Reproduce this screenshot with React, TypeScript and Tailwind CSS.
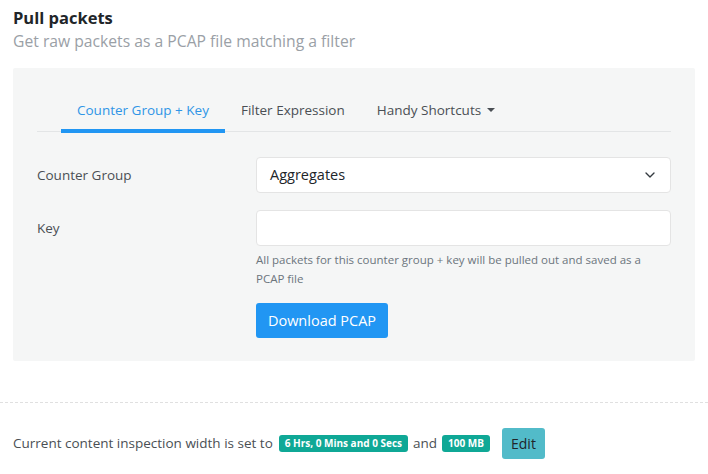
import { ChevronDown } from 'lucide-react';

export default function App() {
  return (
    <div className="w-[708px] h-[474px] bg-white text-[#212529] overflow-hidden" style={{ fontFamily: '"Open Sans", Lato, sans-serif' }}>
      {/* Header */}
      <div className="px-[13px] pt-[6px]">
        <h2 className="text-[16.5px] font-bold leading-[24px] text-[#212529]">Pull packets</h2>
        <p className="text-[15.7px] leading-[22px] text-[#9aa0a6]">Get raw packets as a PCAP file matching a filter</p>
      </div>

      {/* Panel */}
      <div className="mx-[13px] mt-[16px] w-[682px] h-[293px] bg-[#f5f6f6] rounded-[2px] px-[24px] pt-[28px]">
        <div className="flex border-b border-[#e3e5e6] h-[36px] items-stretch">
          <div className="ml-[24px] px-[16px] text-[13.5px] text-[#2f95e6] border-b-[4px] border-[#2196f3] mb-[-2px] pt-[4px]">Counter Group + Key</div>
          <div className="px-[16px] text-[13.5px] text-[#4a4f54] pt-[4px]">Filter Expression</div>
          <div className="px-[16px] text-[13.5px] text-[#4a4f54] pt-[4px] flex items-start gap-[6px]">
            Handy Shortcuts
            <span className="mt-[8px] w-0 h-0 border-l-[4px] border-r-[4px] border-t-[4px] border-l-transparent border-r-transparent border-t-[#4a4f54]" />
          </div>
        </div>

        <div className="mt-[25px] flex items-center">
          <div className="w-[219px] text-[13.5px] text-[#4a4f54]">Counter Group</div>
          <div className="flex-1 h-[36px] bg-white border border-[#e4e4e4] rounded-[4px] flex items-center justify-between pl-[13px] pr-[12px]">
            <span className="text-[14.5px] text-[#212529]">Aggregates</span>
            <ChevronDown size={16} strokeWidth={2} className="text-[#343a40]" />
          </div>
        </div>

        <div className="mt-[17px] flex items-start">
          <div className="w-[219px] text-[13.5px] text-[#4a4f54] pt-[8px]">Key</div>
          <div className="flex-1">
            <div className="h-[36px] bg-white border border-[#e4e4e4] rounded-[4px]" />
            <p className="mt-[4px] text-[11.5px] leading-[19px] text-[#6c757d]">All packets for this counter group + key will be pulled out and saved as a PCAP file</p>
            <button className="mt-[15px] h-[35px] w-[132px] bg-[#2196f3] text-white text-[14.5px] rounded-[3px]">Download PCAP</button>
          </div>
        </div>
      </div>

      {/* Footer */}
      <div className="mt-[41px] border-t border-dashed border-[#e0e0e0] px-[13px] pt-[25px] flex items-center gap-[4px] text-[13.5px] text-[#4a4f54]">
        <span>Current content inspection width is set to</span>
        <span className="bg-[#0fa896] text-white text-[10px] font-bold px-[6px] h-[17px] leading-[17px] rounded-[3px] ml-[2px]">6 Hrs, 0 Mins and 0 Secs</span>
        <span className="ml-[1px]">and</span>
        <span className="bg-[#0fa896] text-white text-[10px] font-bold px-[6px] h-[17px] leading-[17px] rounded-[3px] ml-[1px]">100 MB</span>
        <button className="ml-[8px] h-[31px] w-[43px] bg-[#52bbc9] text-[#212529] text-[14px] rounded-[3px]">Edit</button>
      </div>
    </div>
  );
}
